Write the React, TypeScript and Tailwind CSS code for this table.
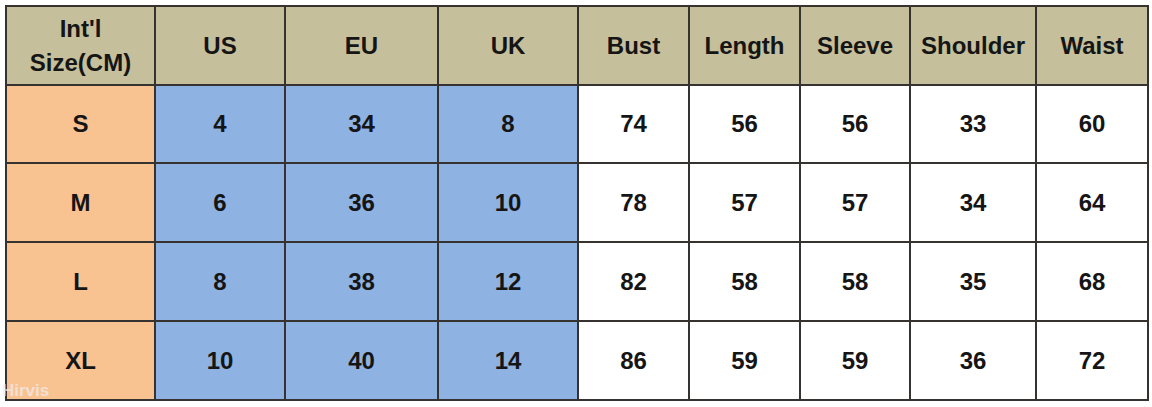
import React from "react";

const headers = ["US", "EU", "UK", "Bust", "Length", "Sleeve", "Shoulder", "Waist"];
const rows: [string, number[]][] = [
  ["S", [4, 34, 8, 74, 56, 56, 33, 60]],
  ["M", [6, 36, 10, 78, 57, 57, 34, 64]],
  ["L", [8, 38, 12, 82, 58, 58, 35, 68]],
  ["XL", [10, 40, 14, 86, 59, 59, 36, 72]],
];

export default function App() {
  return (
    <div
      className="relative w-[1152px] h-[407px] bg-white pt-[5px] pl-[5px]"
      style={{ fontFamily: '"Liberation Sans", Arial, sans-serif' }}
    >
      <div className="grid w-[1144px] grid-cols-[147px_128px_151px_138px_109px_109px_108px_124px_110px] grid-rows-[77px_76px_77px_77px_77px] gap-[2px] border-2 border-[#353230] bg-[#353230] text-[24px] font-bold text-[#151515]">
        <div className="flex flex-col items-center justify-center bg-[#c6bf9b] leading-[34px]">
          <span>Int'l</span>
          <span>Size(CM)</span>
        </div>
        {headers.map((h) => (
          <div key={h} className="flex items-center justify-center bg-[#c6bf9b]">
            {h}
          </div>
        ))}
        {rows.map(([s, vals]) => (
          <React.Fragment key={s}>
            <div className="flex items-center justify-center bg-[#f9c291]">{s}</div>
            {vals.map((v, i) => (
              <div
                key={i}
                className={
                  "flex items-center justify-center " +
                  (i < 3 ? "bg-[#8eb2e2]" : "bg-white")
                }
              >
                {v}
              </div>
            ))}
          </React.Fragment>
        ))}
      </div>
      <div className="absolute left-[2px] top-[378px] text-[17px] font-bold text-[#f0ecec] opacity-70">
        Hirvis
      </div>
    </div>
  );
}
